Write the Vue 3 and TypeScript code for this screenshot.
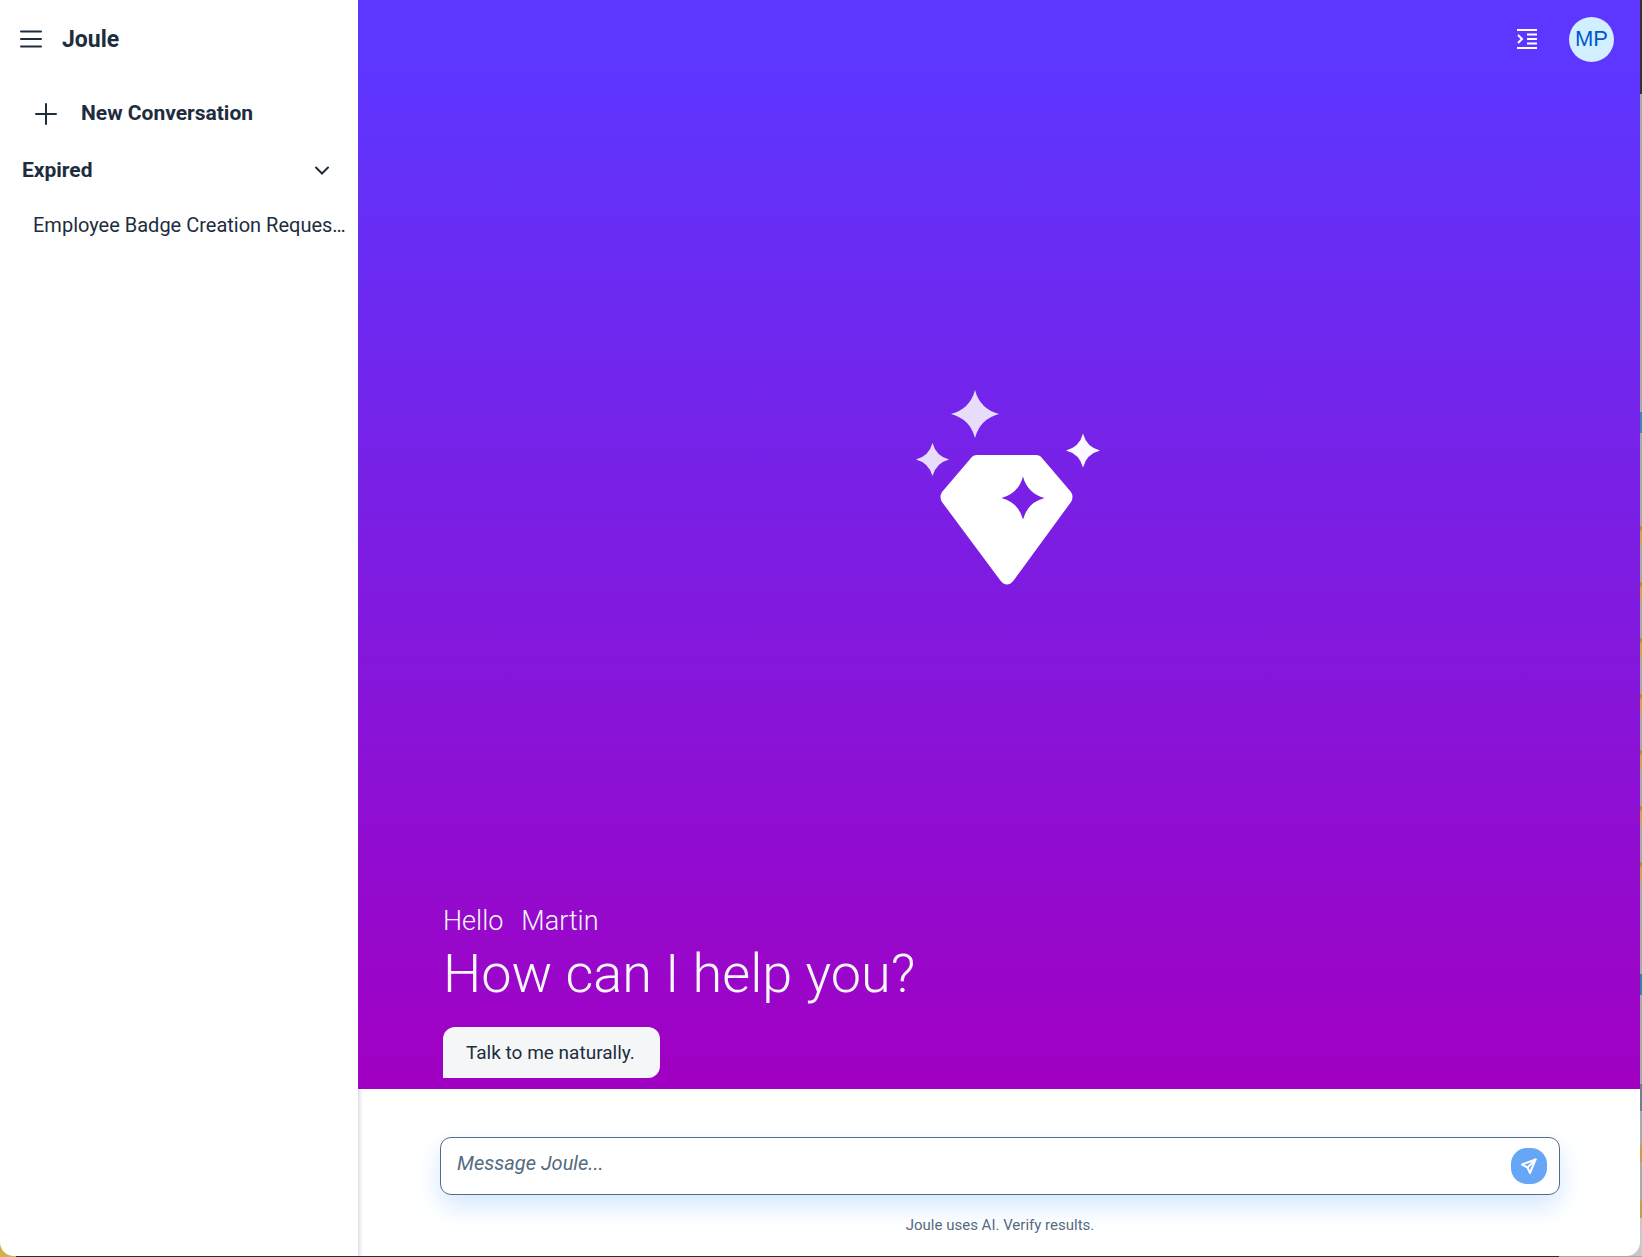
<script setup lang="ts">
import { ref } from 'vue'

interface Conversation {
  id: number
  title: string
}

const conversations: Conversation[] = [{ id: 1, title: 'Employee Badge Creation Reques…' }]
const expanded = ref(true)
const message = ref('')
</script>

<template>
  <div class="desktop">
    <div class="window">
      <aside class="sidebar">
        <header class="brand">
          <button class="icon-button" type="button" aria-label="Menu">
            <svg width="24" height="24" viewBox="0 0 24 24"><path d="M2 4.500H22M2 12H22M2 19.500H22" /></svg>
          </button>
          <h1>Joule</h1>
        </header>
        <button class="new-conversation" type="button">
          <svg width="24" height="24" viewBox="0 0 24 24"><path d="M12 2V22M2 12H22" /></svg>
          <span>New Conversation</span>
        </button>
        <button class="group" type="button" :aria-expanded="expanded" @click="expanded = !expanded">
          <span>Expired</span>
          <svg width="16" height="16" viewBox="0 0 16 16"><path d="M2 5.500L8 11.500L14 5.500" /></svg>
        </button>
        <ul v-if="expanded" class="conversations">
          <li v-for="item in conversations" :key="item.id">
            <a href="#">{{ item.title }}</a>
          </li>
        </ul>
      </aside>

      <main class="main">
        <section class="hero">
          <div class="toolbar">
            <button class="icon-button" type="button" aria-label="Collapse panel">
              <svg class="collapse" width="20" height="20" viewBox="0 0 20 20">
                <path d="M0 1H20M10 5.500H20M10 10H20M10 14.500H20M0 19H20M1 6L5 10L1 14" />
              </svg>
            </button>
            <button class="avatar" type="button" aria-label="Profile">MP</button>
          </div>

          <div class="stage">
            <svg width="184" height="196" viewBox="0 0 184 196" aria-hidden="true">
              <path class="faint" d="M59 0Q64 19 83 24Q64 29 59 48Q54 29 35 24Q54 19 59 0Z" />
              <path class="faint" d="M16.500 53Q20 66 33 69.500Q20 73 16.500 86Q13 73 0 69.500Q13 66 16.500 53Z" />
              <path class="bright" d="M167 43.500Q170.500 57 184 60.500Q170.500 64 167 77.500Q163.500 64 150 60.500Q163.500 57 167 43.500Z" />
              <path
                class="gem"
                fill-rule="evenodd"
                d="M61 65H120Q124 65 126 68L155 102Q158 107 155 112L98 190Q91 199 84 190L26 112Q23 107 26 102L55 68Q57 65 61 65ZM107 86.500Q102.500 103.500 85.500 108Q102.500 112.500 107 129.500Q111.500 112.500 128.500 108Q111.500 103.500 107 86.500Z"
              />
            </svg>
          </div>

          <div class="greeting">
            <p class="hello"><span>Hello</span><span>Martin</span></p>
            <h2>How can I help you?</h2>
            <p class="bubble">Talk to me naturally.</p>
          </div>
        </section>

        <footer class="composer">
          <form class="field" @submit.prevent>
            <input v-model="message" type="text" placeholder="Message Joule..." aria-label="Message Joule" />
            <button class="send" type="submit" aria-label="Send">
              <svg width="16" height="16" viewBox="0 0 16 16">
                <path d="M14.500 1.500L1 6.500L6.500 9.500L9 15Z" /><path d="M14.500 1.500L6.500 9.500" />
              </svg>
            </button>
          </form>
          <p class="note">Joule uses AI. Verify results.</p>
        </footer>
      </main>
    </div>
  </div>
</template>

<style>
body {
  margin: 0;
}
</style>

<style scoped>
* {
  box-sizing: border-box;
}
h1,
h2,
p,
ul {
  margin: 0;
  padding: 0;
}
button {
  border: 0;
  padding: 0;
  background: none;
  color: inherit;
  font: inherit;
  cursor: pointer;
}
svg {
  display: block;
  flex: none;
  fill: none;
  stroke: currentColor;
  stroke-width: 2;
  stroke-linecap: round;
}
.desktop {
  min-height: 100vh;
  padding: 0 2px 1px 0;
  display: flex;
  background:
    linear-gradient(#d2b04c, #d2b04c) left bottom / 16px 16px no-repeat,
    linear-gradient(90deg, #2c2c2e 1559px, #a8a8a8 1559px) left bottom / 100% 1px no-repeat,
    repeating-linear-gradient(#b9922f 0 5px, #c8a859 5px 20px, #aaa 20px 56px) right 526px / 2px 356px no-repeat,
    linear-gradient(
        #333 94px,
        #aaa 94px 412px,
        #3f87b5 412px 433px,
        #aaa 433px 974px,
        #2f86a0 974px 995px,
        #aaa 995px 1084px,
        #6d7f90 1084px 1111px,
        #aaa 1111px 1145px,
        #c0a04f 1145px 1162px,
        #aaa 1162px 1201px,
        #c0a04f 1201px 1218px,
        #c8c8c8 1218px
      )
      right top / 20px 100% no-repeat;
  font-family: Roboto, 'Liberation Sans', sans-serif;
  font-size: 20px;
  line-height: 24px;
  color: #1d2d3e;
}
.window {
  flex: 1;
  display: flex;
  background: #fff;
  border-radius: 0 0 14px 14px;
  overflow: hidden;
}
.sidebar {
  width: 358px;
  flex: none;
}
.brand {
  display: flex;
  align-items: center;
  gap: 19px;
  height: 78px;
  padding-left: 19px;
}
h1 {
  padding-top: 2px;
  font-size: 23px;
  line-height: 28px;
}
.new-conversation {
  display: flex;
  align-items: center;
  gap: 23px;
  width: 100%;
  height: 72px;
  padding-left: 34px;
  font-size: 21px;
  font-weight: 700;
}
.new-conversation span {
  padding-bottom: 2px;
}
.group {
  display: flex;
  align-items: center;
  justify-content: space-between;
  width: 100%;
  height: 40px;
  padding: 0 28px 0 22px;
  font-size: 21px;
  font-weight: 700;
}
.conversations {
  list-style: none;
  padding: 23px 0 0 33px;
  white-space: nowrap;
}
.conversations a {
  color: inherit;
  text-decoration: none;
}
.main {
  flex: 1;
  min-width: 0;
  display: flex;
  flex-direction: column;
}
.hero {
  flex: 1;
  display: flex;
  flex-direction: column;
  background: linear-gradient(#5d36ff 0%, #5d36ff 6%, #a100c2 100%);
  color: #f5f6f7;
}
.toolbar {
  display: flex;
  align-items: center;
  justify-content: flex-end;
  gap: 32px;
  height: 78px;
  padding-right: 26px;
}
.collapse {
  color: #fff;
  stroke-linecap: butt;
}
.avatar {
  width: 45px;
  height: 45px;
  border-radius: 50%;
  background: #d1efff;
  color: #0057d2;
  font-family: 'Liberation Sans', sans-serif;
  font-size: 22px;
}
.stage {
  flex: 1;
  display: flex;
  align-items: center;
  justify-content: center;
  padding: 0 0 7px 18px;
}
.stage svg {
  stroke: none;
}
.faint {
  fill: #e8dcfb;
}
.bright {
  fill: #fbf8ff;
}
.gem {
  fill: #fff;
}
.greeting {
  padding: 0 85px 11px;
}
.hello {
  display: flex;
  gap: 18px;
  font-size: 27px;
  font-weight: 300;
  line-height: 32px;
}
h2 {
  font-size: 54px;
  font-weight: 300;
  line-height: 74px;
}
.bubble {
  width: fit-content;
  margin-top: 16px;
  padding: 14px 25px 13px 23px;
  border-radius: 12px 12px 12px 0;
  background: #f5f6f7;
  color: #1d2d3e;
  font-size: 19px;
}
.composer {
  padding: 48px 80px 19px 82px;
  box-shadow: inset 5px 0 5px -4px #c8ccd2;
}
.field {
  display: flex;
  align-items: center;
  height: 58px;
  padding: 0 12px 0 16px;
  border: 1px solid #556b82;
  border-radius: 11px;
  background: #fff;
  box-shadow: 0 11px 26px #d4e7ff;
}
input {
  flex: 1;
  min-width: 0;
  padding: 0 0 7px;
  border: 0;
  outline: 0;
  background: none;
  font: inherit;
}
input::placeholder {
  color: #556b82;
  font-style: italic;
  opacity: 1;
}
.send {
  display: grid;
  place-items: center;
  width: 36px;
  height: 36px;
  border-radius: 16px;
  background: #66a6f7;
  color: #fff;
}
.send path {
  stroke-linejoin: round;
}
.note {
  margin-top: 18px;
  font-size: 15px;
  text-align: center;
  color: #556b82;
}
</style>
